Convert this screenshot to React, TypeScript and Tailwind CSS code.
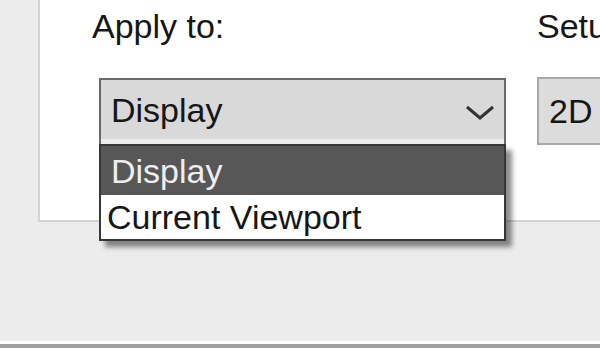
import { ChevronDown } from "lucide-react";

const Combo = () => {
  return (
    <div className="relative ml-[7px] mt-[32px] w-[407px]">
      <div className="h-[66px] border-2 border-b-0 border-[#6a6a6a] bg-[#d9d9d9] flex flex-col">
        <div className="flex-1 flex items-center justify-between pl-[10px] pr-[9px]">
          <span className="text-[34px] leading-[40px] text-[#161616]">Display</span>
          <svg width="30" height="16" viewBox="0 0 30 16" className="mt-[6px]">
            <path d="M2 2 L15 13 L28 2" fill="none" stroke="#333333" strokeWidth="3" />
          </svg>
        </div>
        <div className="h-[5px] bg-[#ededed]" />
      </div>
      <ul className="absolute left-0 top-full w-[407px] border-2 border-[#363636] bg-white shadow-[6px_6px_5px_rgba(0,0,0,0.45)] z-10">
        <li className="h-[49px] bg-[#575757] text-[#eeeeee] text-[34px] leading-[40px] flex items-center pl-[10px]">
          Display
        </li>
        <li className="h-[44px] text-[#161616] text-[34px] leading-[40px] flex items-center pl-[6px]">
          Current Viewport
        </li>
      </ul>
    </div>
  );
};

export default function App() {
  return (
    <div className="w-[600px] h-[348px] bg-[#ececec] flex overflow-hidden font-['Liberation_Sans',Arial,sans-serif]">
      <div className="w-[4px] bg-[#8e8e8e]" />
      <div className="flex-1 flex flex-col">
        <div className="h-[222px] ml-[38px] bg-white border-l-2 border-b-2 border-[#d3d3d3] flex pl-[52px] pt-[6px]">
          <div className="flex flex-col">
            <span className="text-[34px] leading-[40px] text-[#161616]">Apply to:</span>
            <Combo />
          </div>
          <div className="flex flex-col ml-[31px] shrink-0">
            <span className="text-[34px] leading-[40px] text-[#161616] whitespace-nowrap">Setup</span>
            <div className="mt-[31px] h-[68px] w-[120px] border-2 border-[#a9a9a9] bg-[#dcdcdc] flex items-center pl-[10px]">
              <span className="text-[34px] leading-[40px] text-[#161616]">2D</span>
            </div>
          </div>
        </div>
        <div className="flex-1" />
        <div className="h-[3px] bg-white" />
        <div className="h-[4px] bg-[#a0a0a0]" />
      </div>
    </div>
  );
}
